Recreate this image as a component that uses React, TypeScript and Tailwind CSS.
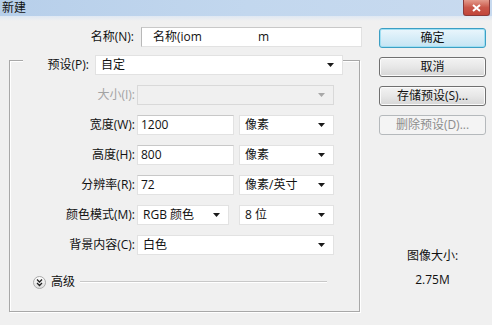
import React from "react";

const FONT = { fontFamily: '"Open Sans", "Noto Sans CJK SC", sans-serif' };

function Arrow({ disabled }: { disabled?: boolean }) {
  return (
    <svg width="7" height="4" viewBox="0 0 7 4" className="shrink-0">
      <path d="M0 0h7L3.5 4z" fill={disabled ? "#a8a8a8" : "#1a1a1a"} />
    </svg>
  );
}

function Select({ value, w, disabled }: { value?: string; w: string; disabled?: boolean }) {
  return (
    <div
      className={`${w} h-[20px] flex items-center justify-between pl-[5px] pr-[8px] border ${
        disabled ? "bg-[#f0f0f0] border-[#d9d9d9]" : "bg-white border-[#e2e2e2]"
      }`}
    >
      <span className="text-[#111] leading-none">{value}</span>
      <Arrow disabled={disabled} />
    </div>
  );
}

function Input({ value, w }: { value: string; w: string }) {
  return (
    <div className={`${w} h-[20px] flex items-center pl-[3px] bg-white border border-[#e2e2e2] border-t-[#c8c8c8]`}>
      <span className="text-[#111] leading-none">{value}</span>
    </div>
  );
}

function Row({ label, children, disabled }: { label: string; children: React.ReactNode; disabled?: boolean }) {
  return (
    <div className="flex items-center h-[20px]">
      <div className={`w-[127px] text-right pr-[2px] ${disabled ? "text-[#a3a3a3]" : "text-[#111]"}`}>{label}</div>
      <div className="flex items-center gap-[5px]">{children}</div>
    </div>
  );
}

function Btn({ label, primary, disabled }: { label: string; primary?: boolean; disabled?: boolean }) {
  const cls = disabled
    ? "border-[#b5b9bc] bg-[#f4f4f4] text-[#8d8d8d]"
    : primary
    ? "border-[#3c9fc4] bg-gradient-to-b from-[#eaf6fc] to-[#c4e4f3] text-[#111] shadow-[inset_0_0_0_1px_#9fdff3]"
    : "border-[#707070] bg-gradient-to-b from-[#f3f3f3] via-[#e7e7e7] to-[#d6d6d6] text-[#111] shadow-[inset_0_0_0_1px_#fbfbfb]";
  return (
    <div className={`w-[107px] h-[20px] rounded-[3px] border flex items-center justify-center leading-none ${cls}`}>
      {label}
    </div>
  );
}

export default function App() {
  return (
    <div className="w-[492px] h-[325px] bg-[#f0f0f0] overflow-hidden text-[12px]" style={FONT}>
      {/* title bar */}
      <div className="h-[16px] flex items-start justify-between bg-gradient-to-r from-[#b7cfea] via-[#c2d7ee] to-[#c8daef]">
        <span className="pl-[2px] pt-[1px] leading-[14px] text-[#111]">新建</span>
        <div className="mr-[2px] w-[27px] h-[16px] rounded-b-[3px] border border-t-0 border-[#8a3a3a] bg-gradient-to-b from-[#e39a8c] via-[#c9574a] to-[#c2453a] flex items-center justify-center">
          <svg width="9" height="8" viewBox="0 0 9 8">
            <path d="M1 1l7 6M8 1L1 7" stroke="#fff" strokeWidth="2" />
          </svg>
        </div>
      </div>
      <div className="h-[5px] bg-gradient-to-b from-[#dfe8f3] to-[#f0f0f0]" />

      <div className="flex">
        {/* left */}
        <div className="w-[370px] pt-[6px]">
          <div className="flex items-center h-[20px]">
            <div className="w-[134px] text-right text-[#111]">名称(N):</div>
            <div className="ml-[7px] w-[221px] h-[20px] flex items-center bg-white border border-[#e2e2e2] border-t-[#c8c8c8] border-l-[#b8b8b8]">
              <span className="pl-[11px] w-[116px] text-[#111] leading-none">名称(iom</span>
              <span className="text-[#111] leading-none">m</span>
            </div>
          </div>

          <div className="mt-[13px] ml-[9px] w-[351px] h-[252px] border border-[#a8a8a8] shadow-[1px_1px_0_#fff,inset_1px_1px_0_#fff]">
            <div className="flex items-center h-[20px] -mt-[6px]">
              <div className="ml-[13px] w-[72px] text-right pr-[6px] bg-[#f0f0f0] text-[#111]">预设(P):</div>
              <Select value="自定" w="w-[248px]" />
            </div>

            <div className="mt-[10px] flex flex-col gap-[10px]">
              <Row label="大小(I):" disabled>
                <Select w="w-[197px]" disabled />
              </Row>
              <Row label="宽度(W):">
                <Input value="1200" w="w-[97px]" />
                <Select value="像素" w="w-[95px]" />
              </Row>
              <Row label="高度(H):">
                <Input value="800" w="w-[97px]" />
                <Select value="像素" w="w-[95px]" />
              </Row>
              <Row label="分辨率(R):">
                <Input value="72" w="w-[97px]" />
                <Select value="像素/英寸" w="w-[95px]" />
              </Row>
              <Row label="颜色模式(M):">
                <Select value="RGB 颜色" w="w-[92px]" />
                <div className="ml-[5px]">
                  <Select value="8 位" w="w-[95px]" />
                </div>
              </Row>
              <Row label="背景内容(C):">
                <Select value="白色" w="w-[197px]" />
              </Row>
            </div>

            <div className="mt-[19px] flex items-center h-[16px] pl-[23px]">
              <svg width="13" height="13" viewBox="0 0 13 13">
                <defs>
                  <linearGradient id="g" x1="0" y1="0" x2="0" y2="1">
                    <stop offset="0" stopColor="#ffffff" />
                    <stop offset="1" stopColor="#dcdcdc" />
                  </linearGradient>
                </defs>
                <circle cx="6.5" cy="6.5" r="6" fill="url(#g)" stroke="#a9a9a9" />
                <path d="M4 3.5l2.5 2.5L9 3.5M4 7l2.5 2.5L9 7" fill="none" stroke="#222" strokeWidth="1.3" />
              </svg>
              <span className="ml-[5px] text-[#111]">高级</span>
              <div className="ml-[5px] w-[247px] h-[2px] border-t border-[#c8c8c8] border-b-white border-b" />
            </div>
          </div>
        </div>

        {/* right */}
        <div className="pl-[9px] pt-[7px] flex flex-col">
          <div className="flex flex-col gap-[9px]">
            <Btn label="确定" primary />
            <Btn label="取消" />
            <Btn label="存储预设(S)..." />
            <Btn label="删除预设(D)..." disabled />
          </div>
          <div className="mt-[114px] flex flex-col items-center gap-[10px] text-[#111]">
            <span className="leading-[14px]">图像大小:</span>
            <span className="leading-[14px]">2.75M</span>
          </div>
        </div>
      </div>
    </div>
  );
}
